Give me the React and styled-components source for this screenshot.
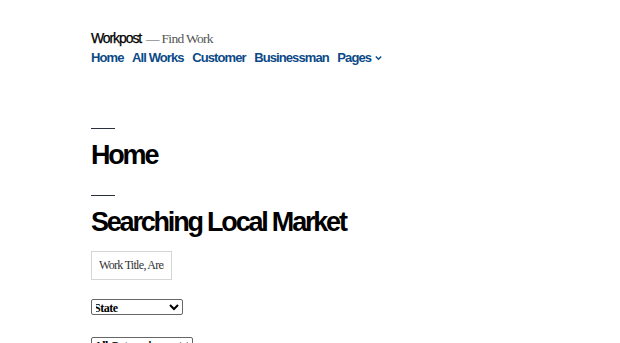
import React from 'react';
import styled, { createGlobalStyle } from 'styled-components';

const GlobalStyle = createGlobalStyle`
  body {
    margin: 0;
    background: #fff;
    font-family: "Liberation Sans", Arial, sans-serif;
    color: #000;
  }
`;

const Page = styled.div`
  padding: 30px 0 0 91px;
`;

const Branding = styled.div`
  display: flex;
  align-items: baseline;
  gap: 5px;
`;

const SiteTitle = styled.span`
  font-size: 14px;
  letter-spacing: -1.1px;
  color: #000;
  -webkit-text-stroke: 0.25px #000;
`;

const Tagline = styled.span`
  font-family: "Liberation Serif", "Times New Roman", serif;
  font-size: 13.5px;
  letter-spacing: -0.7px;
  color: #555;
`;

const Nav = styled.nav`
  display: flex;
  gap: 8.5px;
  margin-top: 3px;
`;

const NavLink = styled.a`
  display: flex;
  align-items: center;
  gap: 3px;
  font-size: 13px;
  font-weight: bold;
  letter-spacing: -0.9px;
  color: #0b4a87;
  text-decoration: none;
`;

const Separator = styled.hr`
  width: 24px;
  border: 0;
  border-top: 1px solid #28303d;
  margin: 0;
  margin-top: ${p => p.$top}px;
`;

const Heading = styled.h1`
  font-size: 27px;
  font-weight: bold;
  letter-spacing: -2.2px;
  margin: 12px 0 0;
  line-height: 1.05;
`;

const SearchForm = styled.form`
  display: flex;
  flex-direction: column;
  align-items: flex-start;
  margin-top: 14px;
`;

const TextInput = styled.input`
  box-sizing: border-box;
  width: 81px;
  height: 29px;
  border: 1px solid #d5d5d5;
  padding: 0 7px;
  font-family: "Liberation Serif", "Times New Roman", serif;
  font-size: 12px;
  letter-spacing: -0.7px;
  &::placeholder { color: #333; }
`;

const Select = styled.select`
  margin-top: ${p => p.$top}px;
  width: ${p => p.$w}px;
  height: 16px;
  font-family: "Liberation Serif", "Times New Roman", serif;
  font-weight: bold;
  font-size: 12px;
  letter-spacing: -0.5px;
  border: 1px solid #666;
  border-radius: 2px;
  background: #fff;
  padding: 0;
  text-indent: -2px;
`;

const Chevron = () => (
  <svg width="9" height="9" viewBox="0 0 10 10" fill="none">
    <path d="M2 4l3 3 3-3" stroke="#0b4a87" strokeWidth="1.6" />
  </svg>
);

export default function App() {
  return (
    <Page>
      <GlobalStyle />
      <Branding>
        <SiteTitle>Workpost</SiteTitle>
        <Tagline>— Find Work</Tagline>
      </Branding>
      <Nav>
        <NavLink href="#">Home</NavLink>
        <NavLink href="#">All Works</NavLink>
        <NavLink href="#">Customer</NavLink>
        <NavLink href="#">Businessman</NavLink>
        <NavLink href="#">Pages<Chevron /></NavLink>
      </Nav>
      <Separator $top={63} />
      <Heading>Home</Heading>
      <Separator $top={26} />
      <Heading>Searching Local Market</Heading>
      <SearchForm>
        <TextInput placeholder="Work Title, Area" />
        <Select $top={19} $w={92}>
          <option>State</option>
        </Select>
        <Select $top={22} $w={102}>
          <option>All Categories</option>
        </Select>
      </SearchForm>
    </Page>
  );
}
